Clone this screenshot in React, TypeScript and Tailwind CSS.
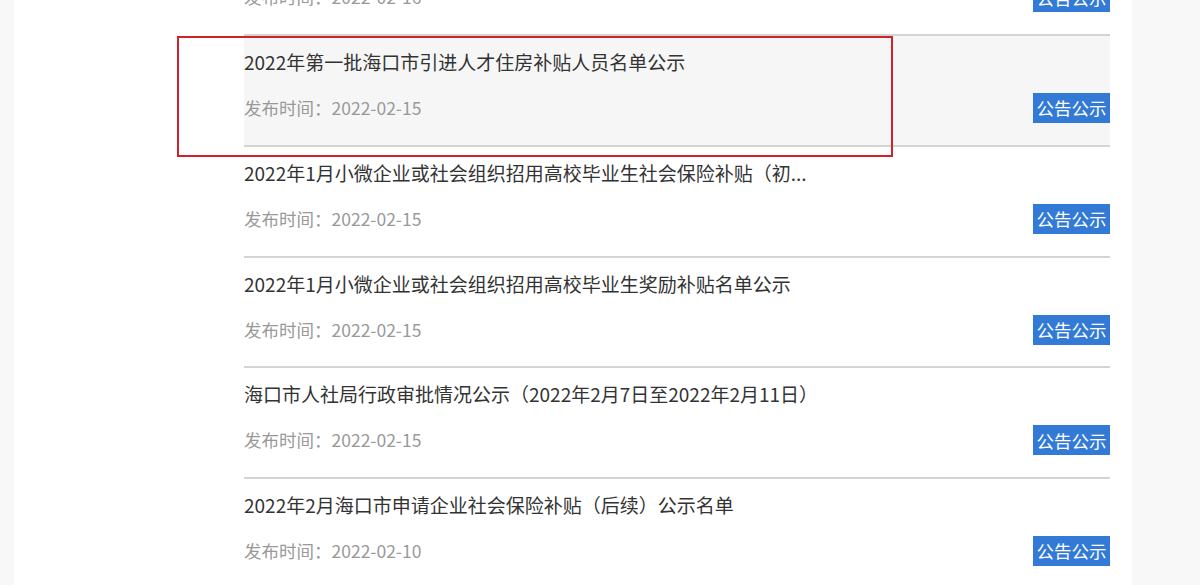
import React from 'react';

type Notice = { title: string; date: string; active?: boolean };

const notices: Notice[] = [
    { title: '2022年海口市就业见习基地名单公示', date: '2022-02-16' },
    { title: '2022年第一批海口市引进人才住房补贴人员名单公示', date: '2022-02-15', active: true },
    { title: '2022年1月小微企业或社会组织招用高校毕业生社会保险补贴（初...', date: '2022-02-15' },
    { title: '2022年1月小微企业或社会组织招用高校毕业生奖励补贴名单公示', date: '2022-02-15' },
    { title: '海口市人社局行政审批情况公示（2022年2月7日至2022年2月11日）', date: '2022-02-15' },
    { title: '2022年2月海口市申请企业社会保险补贴（后续）公示名单', date: '2022-02-10' },
];

function NoticeRow({ item }: { item: Notice }) {
    return (
        <div
            className={
                'box-border h-[110.75px] shrink-0 border-b-2 border-[#d4d4d4] flex flex-col ' +
                (item.active ? 'bg-[#f6f6f6]' : 'bg-white')
            }
        >
            <div className="pt-[14px] text-[19px] leading-[24px] text-[#333] whitespace-nowrap">{item.title}</div>
            <div className="mt-[19px] h-[30px] flex items-center justify-between">
                <span className="text-[17.5px] leading-[24px] text-[#999]">发布时间：{item.date}</span>
                <span className="h-[30px] w-[77px] flex items-center justify-center bg-[#327ad6] text-white text-[17.5px] leading-none">
                    公告公示
                </span>
            </div>
        </div>
    );
}

export default function App() {
    return (
        <div
            className="relative w-[1200px] h-[585px] overflow-hidden bg-[#f8f8f8] flex"
            style={{ fontFamily: '"Noto Sans CJK SC", "Noto Sans", sans-serif' }}
        >
            <div className="w-[14px] shrink-0" />
            <div className="w-[1118px] h-full bg-white pl-[230px] pr-[22px]">
                <div className="mt-[-74.75px] flex flex-col">
                    {notices.map((n, i) => (
                        <NoticeRow key={i} item={n} />
                    ))}
                </div>
            </div>
            {/* highlight annotation */}
            <div className="absolute left-[177px] top-[36px] w-[716px] h-[121px] border-2 border-[#d0222b] pointer-events-none" />
        </div>
    );
}
